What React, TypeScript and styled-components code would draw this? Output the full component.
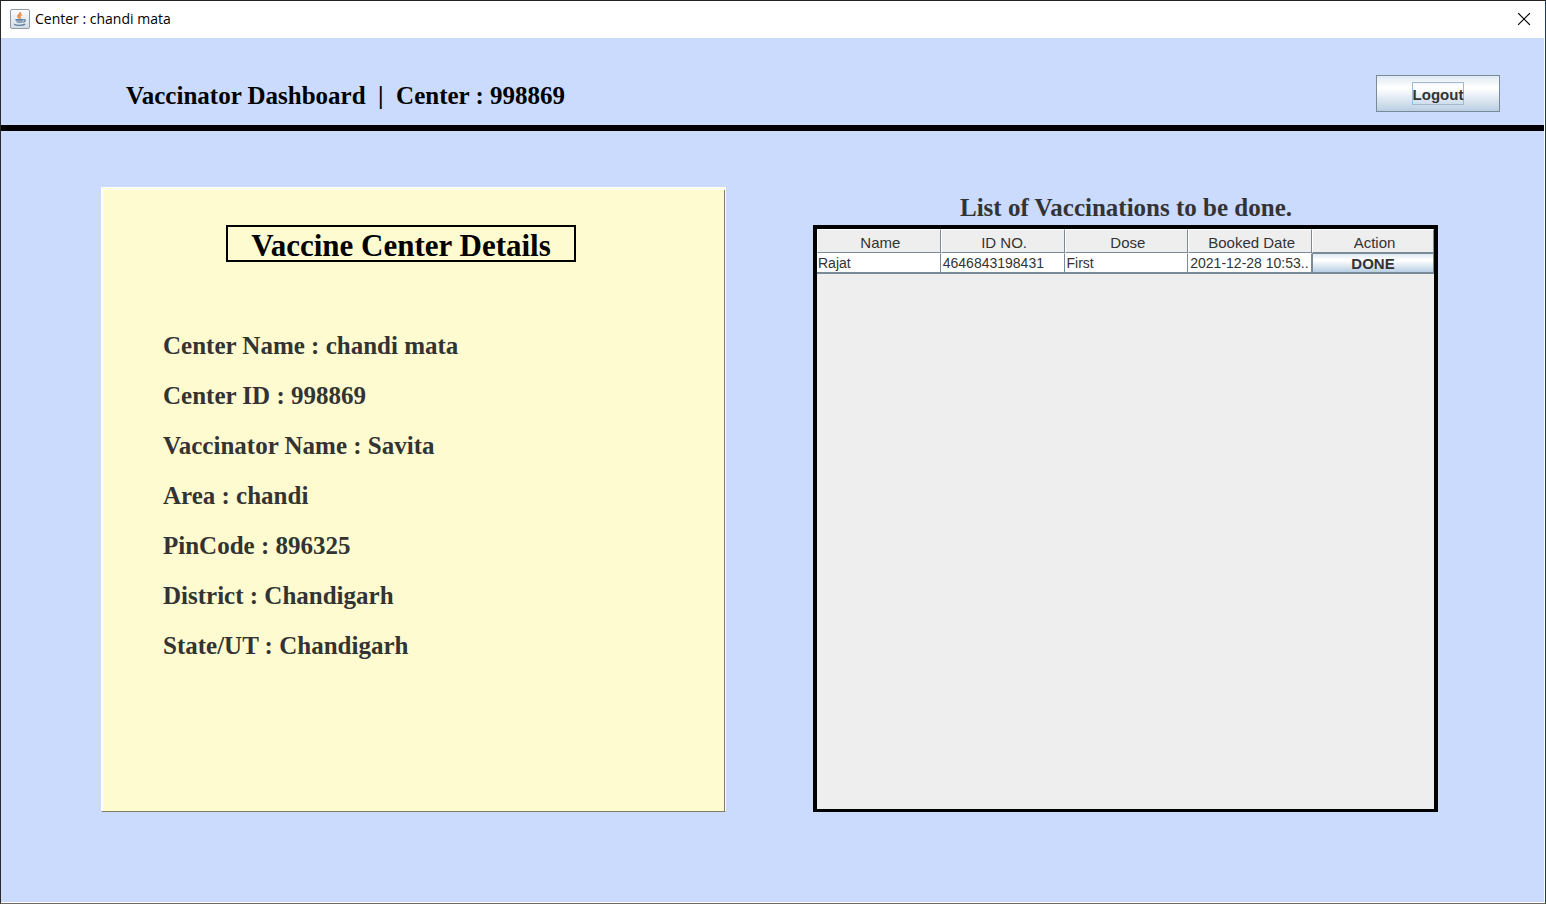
import React from "react";
import styled, { createGlobalStyle } from "styled-components";

const GlobalStyle = createGlobalStyle`
  *, *::before, *::after { box-sizing: border-box; }
  body { margin: 0; }
`;

const serif = `"Liberation Serif", "Times New Roman", serif`;
const sans = `"Liberation Sans", Arial, sans-serif`;

const Window = styled.div`
  display: flex;
  flex-direction: column;
  min-height: 100vh;
  background: #cadbfe;
  border-style: solid;
  border-width: 1px;
  border-color: #262125 #1c3c66 #6b6b6b #2b282c;
  color: #333;
  font-family: ${sans};
`;

const TitleBar = styled.header`
  display: flex;
  align-items: center;
  height: 37px;
  padding: 0 13px 2px 9px;
  gap: 5px;
  background: #fff;
`;

const WindowTitle = styled.span`
  flex: 1;
  color: #000;
  font: 14px/20px "Open Sans", "Noto Sans", sans-serif;
`;

const CloseButton = styled.button`
  display: flex;
  padding: 0;
  border: 0;
  background: none;
`;

const Content = styled.div`
  display: flex;
  flex: 1;
  flex-direction: column;
  border: solid #fff;
  border-width: 0 1px 1px 0;
`;

const Banner = styled.div`
  display: flex;
  justify-content: space-between;
  align-items: flex-start;
  height: 93px;
  padding: 37px 44px 0 125px;
  border-bottom: 6px solid #000;
`;

const BannerTitle = styled.h1`
  margin: 6px 0 0;
  color: #000;
  font: bold 25px/29px ${serif};
  white-space: pre;
`;

const LogoutButton = styled.button`
  display: flex;
  align-items: center;
  justify-content: center;
  width: 124px;
  height: 37px;
  padding: 0;
  border: 1px solid #7a8a99;
  background: linear-gradient(#dfe9f3, #fff 32%, #fff 36%, #b9cfe4);
  color: #333;
  font: bold 15px/22px ${sans};
`;

const FocusRing = styled.span`
  height: 23px;
  padding-top: 1px;
  border: 1px solid #a3b8cc;
`;

const Main = styled.main`
  display: grid;
  flex: 1;
  grid-template-columns: 1fr 1fr;
  gap: 87px;
  padding: 56px 106px 90px 100px;
`;

const DetailsCard = styled.section`
  display: flex;
  flex-direction: column;
  padding: 37px 62px 0 61px;
  border: 1px solid;
  border-color: #fff #fffde8 #7f7d67 #fff;
  box-shadow:
    inset 0 1px #fffbd0,
    inset 0 2px #fff,
    inset -1px 0 #7f7d67,
    inset 1px 0 #fff;
  background: #fffbd0;
`;

const CardTitle = styled.h2`
  align-self: center;
  width: 350px;
  height: 37px;
  margin: 0 24px 0 0;
  border: 2px solid #000;
  color: #000;
  font: bold 31px/38px ${serif};
  text-align: center;
`;

const DetailList = styled.ul`
  margin: 59px 0 0;
  padding: 0;
  list-style: none;
`;

const Detail = styled.li`
  font: bold 25px/50px ${serif};
`;

const Vaccinations = styled.section`
  display: flex;
  flex-direction: column;
`;

const ListTitle = styled.h2`
  margin: 0;
  font: bold 25px/38px ${serif};
  padding: 2px 0 0 1px;
  height: 38px;
  text-align: center;
`;

const TableFrame = styled.div`
  flex: 1;
  border: 4px solid #000;
  border-bottom-width: 3px;
  background: #eee;
`;

const Table = styled.table`
  width: 100%;
  table-layout: fixed;
  border-collapse: separate;
  border-spacing: 0;
  font-size: 15px;
`;

const ActionColumn = styled.col`
  width: 122px;
`;

const HeadCell = styled.th`
  height: 24px;
  padding: 3px 0 0 3px;
  border: 1px solid #7a8a99;
  border-top-color: #fff;
  border-left-color: #fff;
  font-weight: normal;
  line-height: 18px;
`;

const Cell = styled.td`
  height: 21px;
  padding: 1px 0 0 1px;
  border-top: 1px solid #fff;
  border-right: 1px solid #7a8a99;
  border-bottom: 2px solid #7a8a99;
  background: #fff;
  font-size: 14px;
  line-height: 17px;
  white-space: nowrap;

  & + & { padding-left: 2px; }
`;

const ActionCell = styled.td`
  padding: 0;
  height: 21px;
`;

const DoneButton = styled.button`
  display: block;
  width: 100%;
  height: 21px;
  padding: 1px 0 0;
  border: 1px solid #7a8a99;
  border-bottom-width: 2px;
  background: linear-gradient(#dfe9f3, #fff 32%, #fff 36%, #b9cfe4);
  color: #333;
  font: bold 15px/17px ${sans};
`;

const JavaIcon = () => (
  <svg width="20" height="20" viewBox="0 0 20 20" aria-hidden="true">
    <defs>
      <linearGradient id="tile" x1="0" y1="0" x2="0" y2="1">
        <stop offset="0" stopColor="#fdfdfd" />
        <stop offset="1" stopColor="#d3dce4" />
      </linearGradient>
    </defs>
    <rect x=".5" y=".5" width="19" height="19" rx="1.5" fill="url(#tile)" stroke="#8b9aa9" />
    <path d="M10.500 3c.5 1.800-3 2.500-2.500 4.500.2.900.9 1.300 1.400 2M11.900 5.500c-1.700.8-2.500 1.500-1.900 2.400.4.700.1 1.200-.4 1.600" fill="none" stroke="#e8904f" strokeWidth="1.700" />
    <path d="M5.600 10.800h7.600l-1 3.200H7.200z" fill="#8aa3ba" />
    <path d="M5.400 10.700h8M13.500 10.700c2.500-.4 2.300 1.900-.6 2.500M4.200 15.200c2 1.500 8.500 1.500 11-.1" fill="none" stroke="#5e80a0" strokeWidth="1.300" />
  </svg>
);

const CloseIcon = () => (
  <svg width="16" height="16" viewBox="0 0 16 16" aria-hidden="true">
    <path d="M2.500 2.500l11 11M13.500 2.500l-11 11" stroke="#000" strokeWidth="1.100" strokeLinecap="square" />
  </svg>
);

const details = [
  ["Center Name", "chandi mata"],
  ["Center ID", "998869"],
  ["Vaccinator Name", "Savita"],
  ["Area", "chandi"],
  ["PinCode", "896325"],
  ["District", "Chandigarh"],
  ["State/UT", "Chandigarh"],
];

const columns = ["Name", "ID NO.", "Dose", "Booked Date", "Action"];
const bookings = [["Rajat", "4646843198431", "First", "2021-12-28 10:53.."]];

export default function App() {
  return (
    <Window>
      <GlobalStyle />
      <TitleBar>
        <JavaIcon />
        <WindowTitle>Center : chandi mata</WindowTitle>
        <CloseButton type="button" aria-label="Close">
          <CloseIcon />
        </CloseButton>
      </TitleBar>
      <Content>
        <Banner>
          <BannerTitle>{"Vaccinator Dashboard  |  Center : 998869"}</BannerTitle>
          <LogoutButton type="button">
            <FocusRing>Logout</FocusRing>
          </LogoutButton>
        </Banner>
        <Main>
          <DetailsCard>
            <CardTitle>Vaccine Center Details</CardTitle>
            <DetailList>
              {details.map(([label, value]) => (
                <Detail key={label}>{`${label} : ${value}`}</Detail>
              ))}
            </DetailList>
          </DetailsCard>
          <Vaccinations>
            <ListTitle id="list-title">List of Vaccinations to be done.</ListTitle>
            <TableFrame>
              <Table aria-labelledby="list-title">
                <colgroup>
                  <col span={4} />
                  <ActionColumn />
                </colgroup>
                <thead>
                  <tr>
                    {columns.map((column) => (
                      <HeadCell key={column} scope="col">{column}</HeadCell>
                    ))}
                  </tr>
                </thead>
                <tbody>
                  {bookings.map((booking) => (
                    <tr key={booking[1]}>
                      {booking.map((value) => (
                        <Cell key={value}>{value}</Cell>
                      ))}
                      <ActionCell>
                        <DoneButton type="button">DONE</DoneButton>
                      </ActionCell>
                    </tr>
                  ))}
                </tbody>
              </Table>
            </TableFrame>
          </Vaccinations>
        </Main>
      </Content>
    </Window>
  );
}
